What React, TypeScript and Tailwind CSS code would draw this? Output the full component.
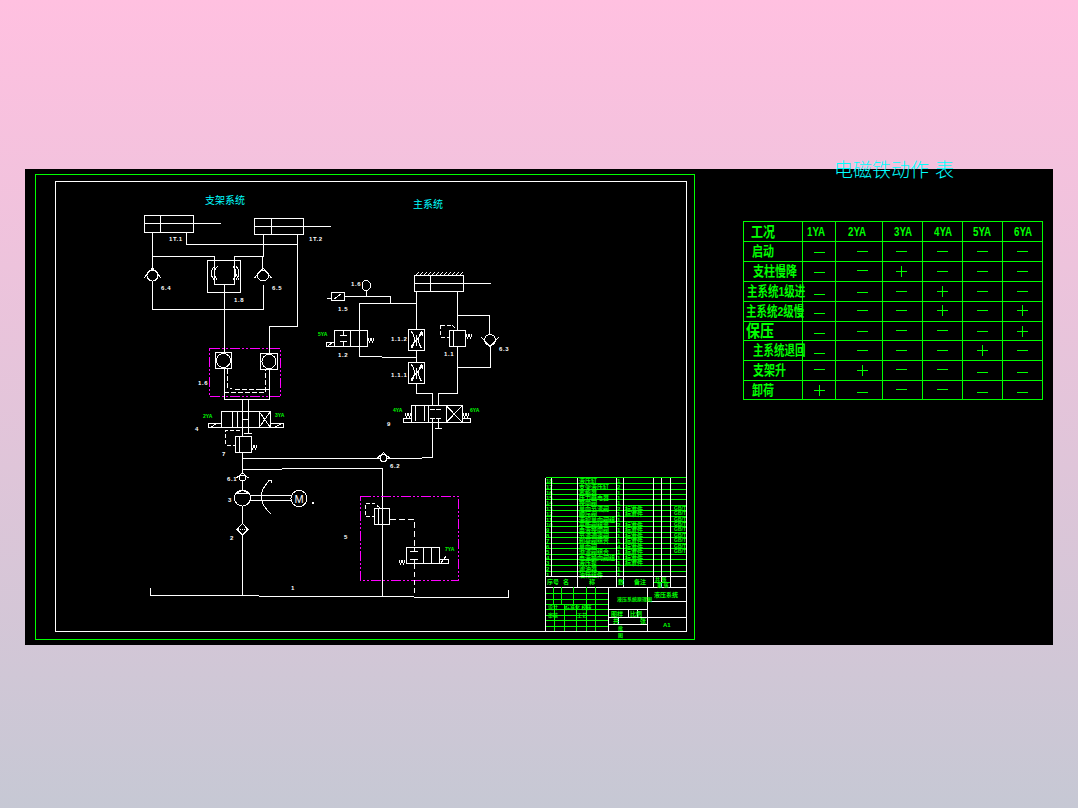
import type { ReactNode } from "react";

const WHITE = "#ffffff";
const GREEN = "#00ff00";
const MAGENTA = "#ff00ff";

// hydraulic symbols, all in page coordinates (the svg viewBox starts at the panel corner)
const Line = ({ d, c = WHITE, dash }: { d: string; c?: string; dash?: string }) => (
  <path d={d} fill="none" stroke={c} strokeWidth={1} strokeDasharray={dash} />
);

const Label = ({ x, y, children, green, size = 6 }: { x: number; y: number; children: ReactNode; green?: boolean; size?: number }) => (
  <text x={x} y={y} fill={green ? GREEN : WHITE} fontSize={size} fontWeight={700} letterSpacing={green ? 0 : 0.6}>
    {children}
  </text>
);

const Throttle = ({ x, y }: { x: number; y: number }) => (
  <Line
    d={`M${x} ${y}h16v21h-16zM${x + 3} ${y + 2}Q${x + 9} ${y + 10} ${x + 3} ${y + 19}M${x + 13} ${y + 2}Q${x + 7} ${y + 10} ${x + 13} ${y + 19}M${x + 2} ${y + 18}L${x + 14} ${y + 3}M${x + 11} ${y + 3}h3v3M${x + 8} ${y + 5}v11`}
  />
);

const Check = ({ x, y, r = 5.5, down }: { x: number; y: number; r?: number; down?: boolean }) => (
  <g>
    <circle cx={x} cy={y} r={r} fill="#000" stroke={WHITE} />
    <Line
      d={
        down
          ? `M${x - r - 3} ${y - r + 3}L${x} ${y + r + 1}L${x + r + 3} ${y - r + 3}`
          : `M${x - r - 3} ${y + r - 3}L${x} ${y - r - 2}L${x + r + 3} ${y + r - 3}`
      }
    />
  </g>
);

const Spring = ({ x, y }: { x: number; y: number }) => (
  <Line d={`M${x} ${y - 4}l1.5 4l1.5 -4l1.5 4l1.5 -4`} />
);

const blockRows = [
  ["18", "液压缸", "", "1"],
  ["17", "支架液压缸", "", "2"],
  ["16", "蓄能器", "", "1"],
  ["15", "压力继电器", "", "1"],
  ["14", "换向阀", "", "1"],
  ["13", "单向节流阀", "标准件", "2"],
  ["12", "顺序阀", "标准件", "1"],
  ["11", "液控单向阀组", "", "1"],
  ["10", "平衡阀组合", "标准件", "2"],
  ["9", "电液换向阀", "标准件", "1"],
  ["8", "节流调速阀", "标准件", "1"],
  ["7", "卸荷阀组合", "标准件", "1"],
  ["6", "单向阀", "标准件", "4"],
  ["5", "溢流阀组合", "标准件", "1"],
  ["4", "电液换向阀组", "标准件", "1"],
  ["3", "液压泵", "标准件", "1"],
  ["2", "滤油器", "", "1"],
  ["1", "油箱组件", "", "1"],
];

const blockLines = [477, 483, 489, 494, 499, 505, 510, 516, 521, 526, 532, 537, 543, 548, 554, 559, 565, 571];

const TitleBlock = () => (
  <g>
    {blockLines.map((y) => (
      <Line key={y} d={`M546 ${y + 0.5}H686`} c={GREEN} />
    ))}
    {blockRows.map((r, i) => (
      <g key={r[0]}>
        <Label x={546} y={blockLines[i] + 6} size={6} green>{r[0]}</Label>
        <Label x={579} y={blockLines[i] + 6} size={6} green>{r[1]}</Label>
        <Label x={625} y={blockLines[i] + 6} size={6} green>{r[2]}</Label>
        <Label x={617} y={blockLines[i] + 6} size={6} green>{r[3]}</Label>
        {i > 4 && i < 14 && <Label x={674} y={blockLines[i] + 5} size={5} green>GB/T</Label>}
      </g>
    ))}
    <Line d="M545.5 477.5V631.5M551.5 477.5V577M577.5 477.5V587M616.5 477.5V587M623.5 477.5V587M653.5 477.5V587M661.5 477.5V587M670.5 477.5V587M686.5 477.5V631M545.5 576.5H686.5M545.5 587.5H686.5" />
    <Line d="M608.5 587.5V631.5M647.5 587.5V631.5M647.5 601.5H686.5M647.5 617.5H686.5M608.5 609.5H647.5M608.5 617.5H647.5M608.5 624.5H647.5M628.5 609.5V617M637.5 609.5V617M618.5 617V624" />
    <Line d="M546 593.5H608M546 599.5H608M546 604.5H608M546 609.5H608M546 615.5H608M546 620.5H608M546 626.5H608" c={GREEN} />
    <Line d="M553.5 587V604M561.5 587V604M573.5 587V604M586.5 587V604M595.5 587V604M554.5 604V631M564.5 604V631M576.5 604V631M586.5 604V631M595.5 604V631M653.5 582.5H670" c={GREEN} />
    <Label x={547} y={584} size={6} green>序号</Label>
    <Label x={563} y={584} size={6} green>名</Label>
    <Label x={589} y={584} size={6} green>称</Label>
    <Label x={618} y={584} size={6} green>数</Label>
    <Label x={634} y={584} size={6} green>备注</Label>
    <Label x={655} y={581} size={5} green>共 张</Label>
    <Label x={657} y={587} size={5} green>第 张</Label>
    <Label x={654} y={597} size={6} green>液压系统</Label>
    <Label x={617} y={601} size={5} green>液压系统原理图</Label>
    <Label x={548} y={609} size={5} green>设计</Label>
    <Label x={565} y={609} size={5} green>标准化 校核</Label>
    <Label x={548} y={617} size={5} green>审核</Label>
    <Label x={577} y={617} size={5} green>工艺</Label>
    <Label x={611} y={616} size={6} green>图样</Label>
    <Label x={630} y={616} size={6} green>比例</Label>
    <Label x={613} y={623} size={6} green>共</Label>
    <Label x={640} y={623} size={6} green>张</Label>
    <Label x={618} y={630} size={5} green>批</Label>
    <Label x={663} y={627} size={6} green>A1</Label>
    <Label x={618} y={637} size={5} green>图</Label>
  </g>
);

const Drawing = () => (
  <svg
    viewBox="25 169 672 476"
    className="w-[672px] h-[476px] shrink-0"
    shapeRendering="crispEdges"
  >
    <rect x={35.5} y={174.5} width={659} height={465} fill="none" stroke={GREEN} />
    <rect x={55.5} y={181.5} width={631} height={450} fill="none" stroke={WHITE} />

    <text x={205} y={204} fill="#00ffff" fontSize={10}>支架系统</text>
    <text x={413} y={208} fill="#00ffff" fontSize={10}>主系统</text>

    {/* support cylinders and their pipes */}
    <Line d="M144.5 215.5H193.5V232.5H144.5ZM160.5 215.5V232.5M144.5 223.5H221" />
    <Line d="M254.5 218.5H303.5V234.5H254.5ZM271.5 218.5V234.5M254.5 226.5H331" />
    <Line d="M152.5 232V270M152.5 281V309.5H263.5V285M152.5 256.5H214.5V284.5H234.5V256.5H262.5V270M263.5 234V256.5" />
    <Line d="M186.5 232V244.5H297.5M297.5 234V326.5H269.5V353M224.5 284V352" />
    <Check x={152.5} y={275.5} />
    <Check x={263} y={275.5} />
    <Line d="M207.5 260.5H240.5V292.5H207.5Z" />
    <Line d="M215 266Q208 272 214 280M218 266Q211 272 217 280M233 266Q239 272 233 280M236 266Q242 272 236 280M235 272L239 280" />
    <Label x={169} y={241}>1T.1</Label>
    <Label x={309} y={241}>1T.2</Label>
    <Label x={161} y={290}>6.4</Label>
    <Label x={272} y={290}>6.5</Label>
    <Label x={234} y={302}>1.8</Label>

    {/* main cylinder */}
    {[0, 1, 2, 3, 4, 5, 6, 7, 8, 9, 10, 11].map((i) => (
      <Line key={i} d={`M${416 + i * 4} 275L${419 + i * 4} 272`} />
    ))}
    <Line d="M414.5 275.5H463.5V291.5H414.5ZM430.5 275.5V291.5M414.5 283.5H491" />
    <Line d="M416.5 291V329M416.5 350V362M416.5 384V393.5H432.5V405M457.5 291V330M457.5 315.5H489.5V334M457.5 347V393.5H438.5V405M490.5 346V367H457" />
    <Line d="M344 296.5H390.5V303.5M359.5 303.5H416M359.5 303V356.5H382M382 357.5H416" />
    <path d="M362 283Q366 277 370 283V288Q366 294 362 288Z" fill="none" stroke={WHITE} />
    <Line d="M366.5 291V296" />
    <Line d="M331.5 292.5H344V300.5H331.5ZM334 299L341 294M327 298.5H331" />
    <Label x={351} y={286}>1.6</Label>
    <Label x={338} y={311}>1.5</Label>

    <Line d="M334.5 330.5H367.5V346.5H334.5ZM350.5 330.5V346.5M343.5 330.5V335M340 335H347M343.5 346V341M340 341H347M326.5 342.5H334.5V346.5H326.5ZM328 346L332 343M359 330V334" />
    <Spring x={368} y={342} />
    <Label x={338} y={357}>1.2</Label>
    <Label x={318} y={336} size={5} green>5YA</Label>

    <Throttle x={408.5} y={329.5} />
    <Throttle x={408.5} y={362.5} />
    <Label x={391} y={341}>1.1.2</Label>
    <Label x={391} y={377}>1.1.1</Label>

    <Line d="M449.5 330.5H465.5V346.5H449.5ZM453.5 330.5V346.5" />
    <Line d="M440.5 325H452L457 330M440.5 325V337H449" dash="4 2" />
    <Spring x={466} y={338} />
    <Label x={444} y={356}>1.1</Label>
    <Check x={490} y={340} down />
    <Label x={499} y={351}>6.3</Label>

    {/* valve 9 */}
    <Line d="M411.5 405.5H462.5V422.5H411.5ZM428.5 405.5V422.5M446.5 405.5V422.5M446.5 406L462 422M462 406L446.5 422M415.5 406V421M424.5 406V421" />
    <Line d="M430 409H435M436 409H441M430 418H435M436 418H441M403.5 418.5H411.5V422.5H403.5ZM462.5 418.5H470.5V422.5H462.5Z" />
    <Line d="M432.5 418V457.5H421.5M421.5 458.5H387M438.5 418V428.5M435 428.5H442" />
    <Spring x={405} y={417} />
    <Spring x={463} y={417} />
    <Label x={393} y={412} size={5} green>4YA</Label>
    <Label x={470} y={412} size={5} green>6YA</Label>
    <Label x={387} y={426}>9</Label>

    {/* supply lines */}
    <Line d="M242.5 458.5H380" />
    <Check x={383.5} y={458} r={3.5} />
    <Label x={390} y={468}>6.2</Label>
    <Line d="M242.5 469.5H281.5M281.5 468.5H382.5V596" />

    {/* support circuit block */}
    <rect x={209.5} y={348.5} width={71} height={48} fill="none" stroke={MAGENTA} strokeDasharray="10 2 2 2 2 2" />
    <Line d="M215.5 352.5H231.5V368.5H215.5ZM260.5 353.5H277.5V369.5H260.5Z" />
    <circle cx={223.5} cy={360.5} r={7} fill="none" stroke={WHITE} />
    <circle cx={269} cy={361.5} r={7} fill="none" stroke={WHITE} />
    <Line d="M224.5 368V399.5M269.5 369V399.5M224.5 399.5H269.5M242.5 399V411M248.5 399V411M258 389.5H269" />
    <Line d="M227.5 369V388H232M235 389H258" dash="5 2" />
    <Line d="M224 392.5H265V369" dash="5 2" />
    <Label x={198} y={385}>1.6</Label>
    <Label x={195} y={431}>4</Label>

    {/* valve 4 */}
    <Line d="M221.5 411.5H270.5V427.5H221.5ZM232.5 411.5V427.5M237.5 411.5V427.5M242.5 411.5V427.5M248.5 411.5V427.5M259.5 411.5V427.5M259.5 412L270 427M270 412L259.5 427" />
    <Line d="M208.5 423.5H221.5V427.5H208.5ZM270.5 423.5H283.5V427.5H270.5ZM211 427L216 424M275 427L281 424M242.5 419H248.5" />
    <Label x={203} y={418} size={5} green>2YA</Label>
    <Label x={275} y={417} size={5} green>3YA</Label>
    <Line d="M242.5 427V436M248.5 427V433M244 433.5H252" />
    <Line d="M240 430.5H225.5V445H235" dash="4 2" />
    <Line d="M235.5 436.5H251V452.5H235.5ZM242.5 452V474M239.5 437V452" />
    <Spring x={251} y={449} />
    <Label x={222} y={456}>7</Label>

    {/* pump and motor */}
    <Check x={242.5} y={478} r={3} />
    <Label x={227} y={481}>6.1</Label>
    <circle cx={242.5} cy={498} r={8} fill="none" stroke={WHITE} />
    <Line d="M237 493L242.5 490L248 493ZM242.5 481V490M242.5 506V524M242.5 535V595" />
    <Line d="M250.5 495.5H292M250.5 500.5H292M250.5 495.5V500.5" />
    <path d="M270 480Q252 497 271 514" fill="none" stroke={WHITE} />
    <Line d="M268 480H271V483" />
    <circle cx={299} cy={498.5} r={8} fill="none" stroke={WHITE} />
    <text x={294.5} y={503} fill={WHITE} fontSize={11} fontWeight={400}>M</text>
    <rect x={312} y={502} width={2} height={2} fill={WHITE} />
    <Label x={228} y={502}>3</Label>
    <Line d="M242.5 523.5L248 529.5L242.5 535L237 529.5Z" />
    <Line d="M238 529.5H247" dash="1 1" />
    <Label x={230} y={540}>2</Label>
    <Label x={344} y={539}>5</Label>

    {/* relief block */}
    <rect x={360.5} y={496.5} width={98} height={84} fill="none" stroke={MAGENTA} strokeDasharray="10 2 2 2 2 2" />
    <Line d="M374.5 508.5H389.5V524.5H374.5ZM378.5 508.5V524.5" />
    <Line d="M380 508L374 503H365.5V516.5H374" dash="4 2" />
    <Line d="M389.5 519.5H414.5V547" dash="6 3" />
    <Line d="M406.5 547.5H439.5V563.5H406.5ZM423.5 547.5V563.5M431.5 547.5V563.5M410 551.5H418M414.5 547V551.5M410 559.5H418M414.5 563V559.5M439.5 559.5H448V563.5H439.5ZM441 563L446 556" />
    <Line d="M414.5 564V594" dash="5 3" />
    <Spring x={399} y={564} />
    <Label x={445} y={551} size={5} green>7YA</Label>

    {/* tank */}
    <Line d="M150.5 588V595.5H259M259 596.5H414M414 597.5H508.5V590" />
    <Label x={291} y={590}>1</Label>

    <TitleBlock />
  </svg>
);

const up1 = "-translate-y-px";
const dn1 = "translate-y-px";
const dn2 = "translate-y-[2px]";
const dn3 = "translate-y-[3px]";

type Mark = [string, string?];

const rows: { label: string; pad: string; size: string; marks: Mark[]; h: string }[] = [
  { label: "启动", pad: "pl-[8px]", size: "text-[11px]", h: "h-[20px]", marks: [["-", dn1], ["-"], ["-"], ["-"], ["-"], ["-"]] },
  { label: "支柱慢降", pad: "pl-[9px]", size: "text-[11px]", h: "h-[20px]", marks: [["-", dn1], ["-", up1], ["+"], ["-"], ["-"], ["-"]] },
  { label: "主系统1级进", pad: "pl-[3px]", size: "text-[10.5px]", h: "h-[20px]", marks: [["-", dn3], ["-", dn1], ["-"], ["+"], ["-"], ["-"]] },
  { label: "主系统2级慢", pad: "pl-[2px]", size: "text-[10.5px]", h: "h-[20px]", marks: [["-", dn2], ["-", up1], ["-", up1], ["+", up1], ["-", up1], ["+", up1]] },
  { label: "保压", pad: "pl-[2px]", size: "text-[14px]", h: "h-[19px]", marks: [["-", dn2], ["-"], ["-", up1], ["-", up1], ["-"], ["+"]] },
  { label: "主系统退回", pad: "pl-[9px]", size: "text-[10.5px]", h: "h-[20px]", marks: [["-", dn3], ["-"], ["-"], ["-"], ["+"], ["-"]] },
  { label: "支架升", pad: "pl-[9px]", size: "text-[11px]", h: "h-[20px]", marks: [["-", up1], ["+"], ["-", up1], ["-", up1], ["-", dn2], ["-", dn2]] },
  { label: "卸荷", pad: "pl-[8px]", size: "text-[11px]", h: "h-[19px]", marks: [["+"], ["-", dn2], ["-", up1], ["-", up1], ["-", dn2], ["-", dn2]] },
];

const colPads = ["", "pl-[7px]", "pr-[2px]", "", "", ""];

const heads = [
  { t: "1YA", c: "pr-[5px]" },
  { t: "2YA", c: "pr-[3px]" },
  { t: "3YA", c: "pl-[2px]" },
  { t: "4YA", c: "pl-[2px]" },
  { t: "5YA", c: "" },
  { t: "6YA", c: "pl-[2px]" },
];

const MarkCell = ({ mark, pad }: { mark: Mark; pad: string }) => (
  <td className="p-0 border border-[#00ff00]">
    <div className={`flex items-center justify-center ${pad}`}>
      {mark[0] === "+" ? (
        <svg width="11" height="11" shapeRendering="crispEdges" className={mark[1]}>
          <path d="M0 5.5H11M5.5 0V11" stroke="#00ff00" />
        </svg>
      ) : (
        <span className={`block w-[11px] h-px bg-[#00ff00] ${mark[1] ?? ""}`} />
      )}
    </div>
  </td>
);

const RowLabel = ({ text, size, pad }: { text: string; size: string; pad: string }) => (
  <td className={`p-0 border border-[#00ff00] whitespace-nowrap overflow-visible ${pad}`}>
    <span className={`block origin-left scale-y-125 font-bold leading-none text-[#00ff00] ${size}`}>{text}</span>
  </td>
);

const ActionTable = () => (
  <table className="ml-[46px] mt-[38px] h-[177px] w-[299px] table-fixed border-collapse border border-[#00ff00] text-[10px] leading-none">
    <colgroup>
      <col className="w-[59px]" />
      <col className="w-[33px]" />
      <col className="w-[47px]" />
      <col className="w-[40px]" />
      <col className="w-[40px]" />
      <col className="w-[40px]" />
      <col className="w-[40px]" />
    </colgroup>
    <tbody>
      <tr className="h-[20px]">
        <RowLabel text="工况" size="text-[12px]" pad="pl-[7px]" />
        {heads.map((h) => (
          <td key={h.t} className={`p-0 border border-[#00ff00] text-center ${h.c}`}>
            <span className="inline-block scale-x-75 text-[13px] leading-none font-bold text-[#00ff00]">{h.t}</span>
          </td>
        ))}
      </tr>
      {rows.map((r) => (
        <tr key={r.label} className={r.h}>
          <RowLabel text={r.label} size={r.size} pad={r.pad} />
          {r.marks.map((m, i) => (
            <MarkCell key={i} mark={m} pad={colPads[i]} />
          ))}
        </tr>
      ))}
    </tbody>
  </table>
);

export default function App() {
  return (
    <div className="h-[808px] w-full overflow-hidden bg-gradient-to-b from-[#ffc0e0] to-[#c6c8d4] pt-[169px] pl-[25px] font-['Liberation_Sans','Noto_Sans_CJK_SC',sans-serif]">
      <div className="flex h-[476px] w-[1028px] bg-black">
        <Drawing />
        <div className="flex-1">
          <h1 className="-mt-[10px] h-[24px] pl-[137px] text-[19px] leading-[24px] font-light text-[#00ffff]">
            电磁铁动作<span className="ml-[6px]">表</span>
          </h1>
          <ActionTable />
        </div>
      </div>
    </div>
  );
}
